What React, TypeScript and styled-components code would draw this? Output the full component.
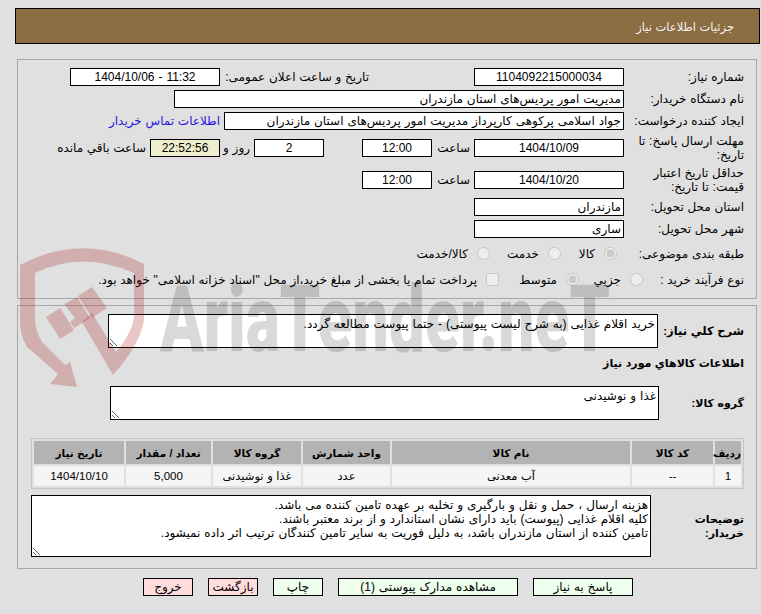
import React from "react";
import styled, { createGlobalStyle } from "styled-components";

const stack = `"Liberation Sans", "DejaVu Sans", sans-serif`;

const Global = createGlobalStyle`
  html, body { margin: 0; padding: 0; background: #e0e0e0; }
  body { font-family: ${stack}; font-size: 12px; color: #000; word-spacing: 0.4px; }
  * { box-sizing: border-box; }
`;
const Page = styled.div`
  position: relative; direction: rtl; width: 761px; height: 614px; overflow: hidden; padding-top: 8px;
`;
const TitleBar = styled.div`
  margin: 0 1px 0 15px; height: 36px; background: #8c6d42; border: 1px solid #000;
  color: #f4f4f4; font-size: 11.5px; line-height: 36px; padding-right: 25px;
`;
const Panel = styled.section`
  margin: 0 4px 0 17px; border: 1px solid #a8a8a8;
`;
const InfoPanel = styled(Panel)`
  margin-top: 15px; height: 240px; padding: 8px 12px 0 0; display: flex; flex-direction: column; gap: 4px;
`;
const NeedPanel = styled(Panel)`
  margin-top: 6px; height: 264px; padding: 8px 12px 0 0;
`;
const Row = styled.div<{ $h?: number }>`
  display: flex; align-items: center; height: ${p => p.$h ?? 18}px;
`;
const Label = styled.div<{ $w?: number }>`
  width: ${p => p.$w ?? 120}px; flex: none; line-height: 14px;
`;
const Field = styled.input.attrs({ readOnly: true })<{ $w: number; $left?: boolean; $bg?: string }>`
  width: ${p => p.$w}px; height: 18px; flex: none; border: 1px solid #000; border-radius: 0; outline: none;
  background: ${p => p.$bg ?? "#fff"}; font: 12px ${stack}; color: #000; word-spacing: 0.6px;
  text-align: ${p => (p.$left ? "right" : "center")}; padding: 0 2px; direction: rtl; margin: 0;
`;
const Unit = styled.span<{ $w: number }>`
  width: ${p => p.$w}px; flex: none; padding-right: 4px; white-space: nowrap;
`;
const Gap = styled.span<{ $w: number }>`
  width: ${p => p.$w}px; flex: none;
`;
const BuyerLink = styled.a`
  color: #2a14e0; margin-right: 4px; text-decoration: none; white-space: nowrap;
`;
const Choice = styled.label<{ $w: number }>`
  display: flex; align-items: center; width: ${p => p.$w}px; flex: none; white-space: nowrap;
  input { margin: 0 0 0 9px; width: 13px; height: 13px; flex: none; position: relative; top: -1px; }
`;
const BoldLabel = styled.div<{ $w: number; $size?: number; $wrap?: number }>`
  width: ${p => p.$w}px; flex: none; font-weight: 700; line-height: 14px; font-size: ${p => p.$size ?? 11}px;
  padding-left: ${p => p.$wrap ?? 0}px;
`;
const NeedRow = styled.div<{ $top?: number }>`
  display: flex; align-items: center; margin-top: ${p => p.$top ?? 0}px;
`;
const TextBox = styled.textarea.attrs({ readOnly: true })<{ $w: number; $h: number }>`
  display: block; width: ${p => p.$w}px; height: ${p => p.$h}px; flex: none; border: 1px solid #000; border-radius: 0; outline: none;
  background: #fff; font: 12px/14px ${stack}; color: #000; word-spacing: 0.6px; padding: 2px; margin: 0; resize: both; direction: rtl;
`;
const Heading = styled.div`
  font-weight: 700; font-size: 11px; height: 14px; line-height: 14px; margin-top: 8px;
`;
const Items = styled.table`
  width: 713px; height: 51px; margin-top: 18px; border: 1px solid #c4c4c4; border-spacing: 2px; table-layout: fixed;
  th { background: #b3b3b3; height: 23px; font-size: 10.5px; font-weight: 700; padding: 0; }
  td { background: #f5f5f5; height: 20px; font-size: 11.5px; text-align: center; padding: 0; }
`;
const Actions = styled.div`
  display: flex; gap: 15px; margin: 9px 128px 0 0;
`;
const Action = styled.button<{ $w: number; $tone: "go" | "stop" }>`
  width: ${p => p.$w}px; height: 18px; border: 1px solid #000; border-radius: 0; padding: 0;
  background: ${p => (p.$tone === "go" ? "#eeffee" : "#ffdddd")}; font: 12px ${stack}; color: #000; word-spacing: 0.6px;
`;
const Watermark = styled.svg`
  position: absolute; inset: 0; width: 761px; height: 614px; pointer-events: none;
`;

const description = `هزینه ارسال ، حمل و نقل و بارگیری و تخلیه بر عهده تامین کننده می باشد.
کلیه اقلام غذایی (پیوست) باید دارای نشان استاندارد و از برند معتبر باشند.
تامین کننده از استان مازندران باشد، به دلیل فوریت به سایر تامین کنندگان ترتیب اثر داده نمیشود.`;

export default function App() {
  return (
    <Page>
      <Global />
      <TitleBar>جزئیات اطلاعات نیاز</TitleBar>
      <InfoPanel>
        <Row>
          <Label>شماره نیاز:</Label>
          <Field $w={150} value="1104092215000034" />
          <Gap $w={105} />
          <Label $w={149}>تاریخ و ساعت اعلان عمومی:</Label>
          <Field $w={150} value="11:32 - 1404/10/06" />
        </Row>
        <Row>
          <Label>نام دستگاه خریدار:</Label>
          <Field $w={450} $left value="مدیریت امور پردیس‌های استان مازندران" />
        </Row>
        <Row>
          <Label>ایجاد کننده درخواست:</Label>
          <Field $w={400} $left value="جواد اسلامی پرکوهی کارپرداز مدیریت امور پردیس‌های استان مازندران" />
          <BuyerLink href="#">اطلاعات تماس خریدار</BuyerLink>
        </Row>
        <Row $h={28}>
          <Label>مهلت ارسال پاسخ: تا تاریخ:</Label>
          <Field $w={150} value="1404/10/09" />
          <Unit $w={42}>ساعت</Unit>
          <Field $w={70} value="12:00" />
          <Gap $w={38} />
          <Field $w={70} value="2" />
          <Unit $w={34}>روز و</Unit>
          <Field $w={70} $bg="#eeeecc" value="22:52:56" />
          <Unit $w={104}>ساعت باقي مانده</Unit>
        </Row>
        <Row $h={28}>
          <Label>حداقل تاریخ اعتبار قیمت: تا تاریخ:</Label>
          <Field $w={150} value="1404/10/20" />
          <Unit $w={42}>ساعت</Unit>
          <Field $w={70} value="12:00" />
        </Row>
        <Row>
          <Label>استان محل تحویل:</Label>
          <Field $w={150} $left value="مازندران" />
        </Row>
        <Row>
          <Label>شهر محل تحویل:</Label>
          <Field $w={150} $left value="ساری" />
        </Row>
        <Row $h={24}>
          <Label $w={127}>طبقه بندی موضوعی:</Label>
          <Choice $w={56}><input type="radio" disabled defaultChecked name="cat" />کالا</Choice>
          <Choice $w={71}><input type="radio" disabled name="cat" />خدمت</Choice>
          <Choice $w={90}><input type="radio" disabled name="cat" />کالا/خدمت</Choice>
        </Row>
        <Row $h={20}>
          <Label $w={101}>نوع فرآیند خرید :</Label>
          <Choice $w={64}><input type="radio" disabled name="kind" />جزیي</Choice>
          <Choice $w={80}><input type="radio" disabled defaultChecked name="kind" />متوسط</Choice>
          <Choice $w={410}><input type="checkbox" disabled />پرداخت تمام یا بخشی از مبلغ خرید،از محل "اسناد خزانه اسلامی" خواهد بود.</Choice>
        </Row>
      </InfoPanel>
      <NeedPanel>
        <NeedRow>
          <BoldLabel $w={86} $size={11.5}>شرح کلي نیاز:</BoldLabel>
          <TextBox $w={550} $h={34} defaultValue="خرید اقلام غذایی (به شرح لیست پیوستی) - حتما پیوست مطالعه گردد." />
        </NeedRow>
        <Heading>اطلاعات کالاهاي مورد نیاز</Heading>
        <NeedRow $top={16}>
          <BoldLabel $w={85}>گروه کالا:</BoldLabel>
          <TextBox $w={549} $h={34} defaultValue="غذا و نوشیدنی" />
        </NeedRow>
        <Items>
          <thead>
            <tr>
              <th style={{ width: 26 }}>ردیف</th>
              <th style={{ width: 81 }}>کد کالا</th>
              <th style={{ width: 238 }}>نام کالا</th>
              <th style={{ width: 87 }}>واحد شمارش</th>
              <th style={{ width: 88 }}>گروه کالا</th>
              <th style={{ width: 85 }}>تعداد / مقدار</th>
              <th>تاریخ نیاز</th>
            </tr>
          </thead>
          <tbody>
            <tr>
              <td>1</td>
              <td>--</td>
              <td>آب معدنی</td>
              <td>عدد</td>
              <td>غذا و نوشیدنی</td>
              <td>5,000</td>
              <td>1404/10/10</td>
            </tr>
          </tbody>
        </Items>
        <NeedRow $top={6}>
          <BoldLabel $w={93} $wrap={30}>توضیحات خریدار:</BoldLabel>
          <TextBox $w={620} $h={62} defaultValue={description} />
        </NeedRow>
      </NeedPanel>
      <Actions>
        <Action $w={100} $tone="go">پاسخ به نیاز</Action>
        <Action $w={180} $tone="go">مشاهده مدارک پیوستی (1)</Action>
        <Action $w={50} $tone="go">چاپ</Action>
        <Action $w={50} $tone="stop">بازگشت</Action>
        <Action $w={50} $tone="stop">خروج</Action>
      </Actions>
      <Watermark viewBox="0 0 761 614" aria-hidden="true">
        <g fill="#a00000" fillOpacity="0.22">
          <path d="M20 265 Q82 232 144 264 L144 320 Q140 345 113 375 L82 322 L92 313 L116 352 Q134 330 134 315 L134 273 Q82 250 35 273 L35 320 Q36 332 42 342 L65 365 L70 362 L77 387 L50 384 L58 374 L27 347 Q20 335 20 323 Z" />
          <path d="M46 317 L60 308 L74 330 L60 339 Z" />
          <path d="M78 296 L92 287 L107 308 L92 318 Z" />
          <path d="M70 301 L77 297 L90 318 L74 328 L70 322 L75 318 L64 304 Z" />
        </g>
        <text x="160" y="351" fill="#000" fillOpacity="0.15" fontFamily="Roboto, sans-serif" fontWeight="900" fontSize="92" textLength="450" lengthAdjust="spacingAndGlyphs" direction="ltr">AriaTender.neT</text>
      </Watermark>
    </Page>
  );
}
